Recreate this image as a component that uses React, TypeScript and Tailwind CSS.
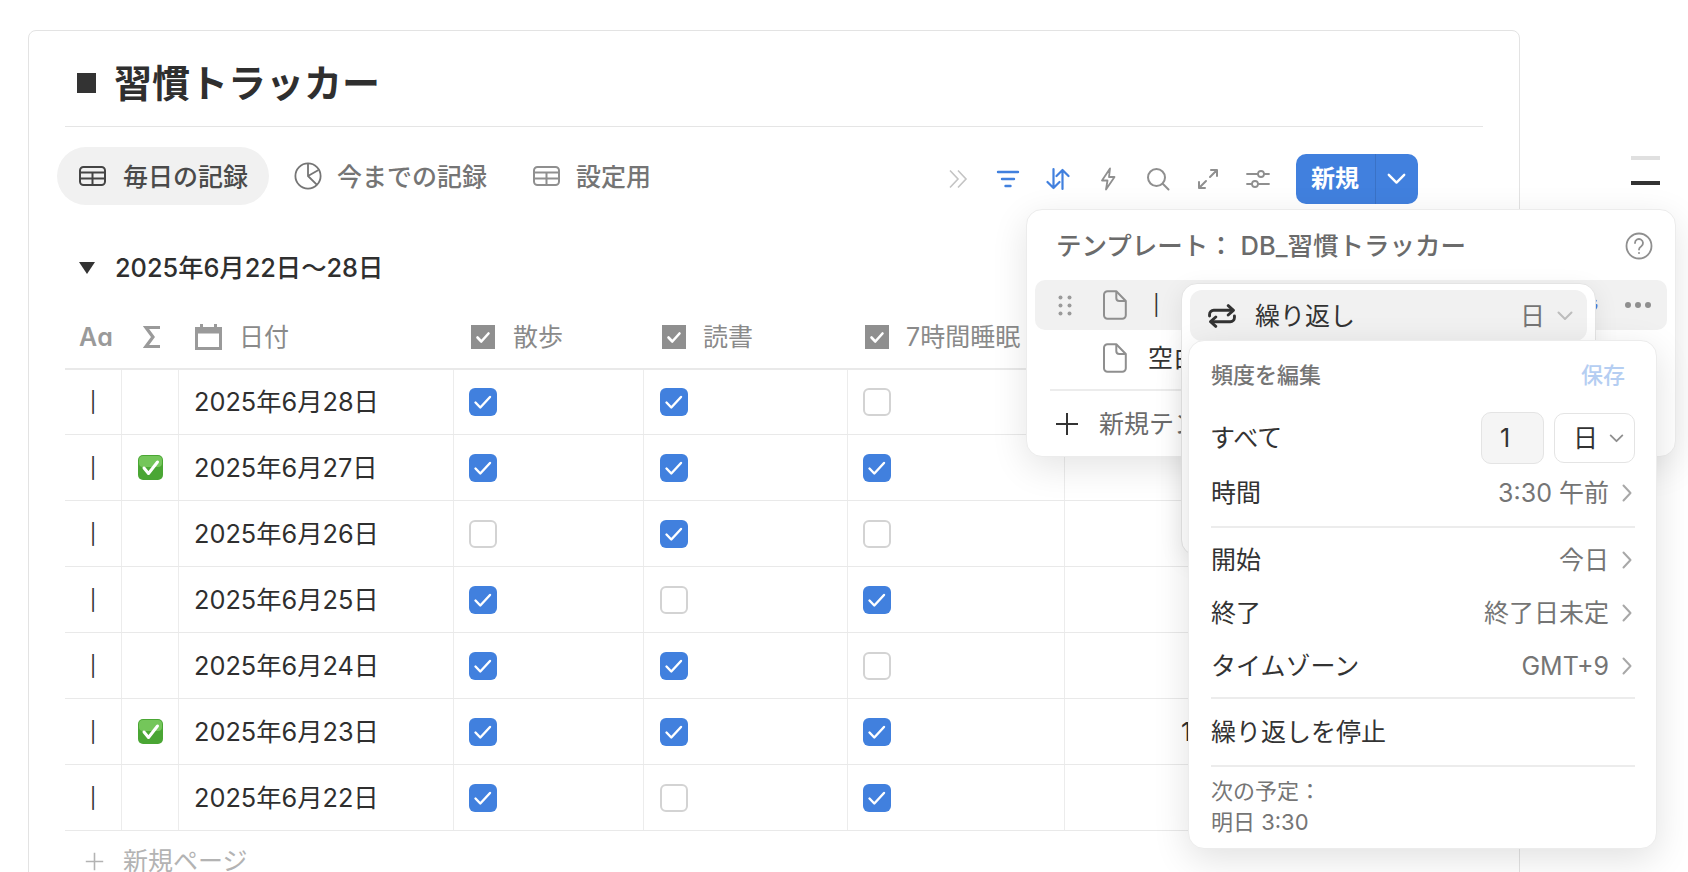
const rows = [
  { date: "2025年6月28日", done: false, walk: true, read: true, sleep: false },
  { date: "2025年6月27日", done: true, walk: true, read: true, sleep: true },
  { date: "2025年6月26日", done: false, walk: false, read: true, sleep: false },
  { date: "2025年6月25日", done: false, walk: true, read: false, sleep: true },
  { date: "2025年6月24日", done: false, walk: true, read: true, sleep: false },
  { date: "2025年6月23日", done: true, walk: true, read: true, sleep: true, count: "10" },
  { date: "2025年6月22日", done: false, walk: true, read: false, sleep: true },
];

const columns = "grid grid-cols-[57px_57px_275px_190px_204px_217px_1fr]";

function TableIcon({ className }: { className?: string }) {
  return (
    <svg viewBox="0 0 27 20" className={className} fill="none" stroke="currentColor" strokeWidth="2">
      <rect x="1" y="1" width="25" height="18" rx="3.5" />
      <path d="M1 6.500h25M1 12.500h25M13.500 6.500V19" />
    </svg>
  );
}

function PieIcon({ className }: { className?: string }) {
  return (
    <svg viewBox="0 0 28 28" className={className} fill="none" stroke="currentColor" strokeWidth="1.800">
      <circle cx="14" cy="14" r="12.600" />
      <path d="M14 1.400V14l9 8.800M14 14l10.500-6" />
    </svg>
  );
}

function FileIcon({ className }: { className?: string }) {
  return (
    <svg viewBox="0 0 24 30" className={className} fill="none" stroke="#8f8f8f" strokeWidth="2" strokeLinejoin="round">
      <path d="M4.500 1.200h8.800l9.500 9.800v14.300a3.500 3.500 0 0 1-3.500 3.500h-14.800a3.500 3.500 0 0 1-3.500-3.500V4.700a3.500 3.500 0 0 1 3.500-3.500z" />
      <path d="M13.300 1.200v6.800a3 3 0 0 0 3 3h6.500" />
    </svg>
  );
}

function RepeatIcon({ className }: { className?: string }) {
  return (
    <svg viewBox="0 0 27 23" className={className} fill="none" stroke="currentColor" strokeWidth="2.800" strokeLinecap="round" strokeLinejoin="round">
      <path d="M1.500 11.500V10a4 4 0 0 1 4-4H24" />
      <path d="M19.500 1.500L24.500 6 19.500 10.500" />
      <path d="M25.500 11.500V13a4 4 0 0 1-4 4H3" />
      <path d="M7.500 12.500L2.500 17 7.500 21.500" />
    </svg>
  );
}

function Caret({ className }: { className?: string }) {
  return (
    <svg viewBox="0 0 16 10" className={className} fill="none" stroke="currentColor" strokeWidth="2" strokeLinecap="round" strokeLinejoin="round">
      <path d="M1.500 1.500L8 8l6.500-6.500" />
    </svg>
  );
}

function Arrow() {
  return (
    <svg viewBox="0 0 10 18" className="w-[10px] h-[18px] text-[#a8a8a8]" fill="none" stroke="currentColor" strokeWidth="2" strokeLinecap="round" strokeLinejoin="round">
      <path d="M1.500 1.500L8.500 9l-7 7.500" />
    </svg>
  );
}

function Cross({ className }: { className?: string }) {
  return (
    <svg viewBox="0 0 24 24" className={className} fill="none" stroke="currentColor" strokeWidth="2">
      <path d="M12 1v22M1 12h22" />
    </svg>
  );
}

function HeaderCheck() {
  return (
    <svg viewBox="0 0 24 24" className="w-[24px] h-[24px] shrink-0">
      <rect width="24" height="24" fill="#8f8f8f" />
      <path d="M6.500 12.500l3.800 4L17.500 8.500" fill="none" stroke="white" strokeWidth="2.600" strokeLinecap="round" strokeLinejoin="round" />
    </svg>
  );
}

function Box({ on }: { on: boolean }) {
  if (!on) {
    return <div className="w-[28px] h-[28px] rounded-[6px] border-2 border-[#d3d3d3] bg-white" />;
  }
  return (
    <div className="w-[28px] h-[28px] rounded-[6px] bg-[#4180de] flex items-center justify-center">
      <svg viewBox="0 0 28 28" className="w-[28px] h-[28px]" fill="none" stroke="white" strokeWidth="2.400" strokeLinecap="round" strokeLinejoin="round">
        <path d="M6.500 14.500l4.800 5L21 9" />
      </svg>
    </div>
  );
}

function GreenCheck() {
  return (
    <svg viewBox="0 0 25 25" className="w-[25px] h-[25px]">
      <rect width="25" height="25" rx="5" fill="#4aa634" />
      <rect x="1" y="1" width="23" height="11" rx="4" fill="#74c65a" />
      <path d="M6 13l4.500 5.500L19.500 7" fill="none" stroke="white" strokeWidth="3" strokeLinecap="round" strokeLinejoin="round" />
    </svg>
  );
}

function DetailRow({ label, value, height = "h-[53px]" }: { label: string; value: string; height?: string }) {
  return (
    <div className={`flex items-center justify-between ${height}`}>
      <span className="text-[#333333]">{label}</span>
      <span className="flex items-center gap-[13px] pr-[3px] text-[#757575]">
        {value}
        <Arrow />
      </span>
    </div>
  );
}

export default function App() {
  return (
    <div className="relative w-full h-[872px] overflow-hidden bg-white pt-[30px] pl-[28px] text-[25px] leading-[32px] text-[#2f2f2f] font-['Inter','Noto_Sans_CJK_JP',sans-serif]">
      <div className="w-[1492px] h-[900px] rounded-[8px] border border-[#e3e3e3] px-[36px]">
        {/* title */}
        <div className="h-[96px] flex items-center gap-[18px] pl-[12px] pt-[8px] border-b border-[#e5e5e5]">
          <div className="w-[19px] h-[20px] bg-[#333333]" />
          <h1 className="text-[38px] leading-[44px] font-bold text-[#2f2f2f]">習慣トラッカー</h1>
        </div>

        {/* tabs and toolbar */}
        <div className="flex items-center justify-between mt-[20px] -ml-[8px] pr-[65px]">
          <div className="flex items-center font-medium text-[#757575]">
            <div className="flex items-center h-[58px] w-[212px] pl-[22px] gap-[17px] rounded-full bg-[#f1f1f1] text-[#4a4a4a]">
              <TableIcon className="w-[27px] h-[20px] text-[#444444]" />
              <span className="pt-[2px]">毎日の記録</span>
            </div>
            <div className="flex items-center gap-[15px] ml-[25px]">
              <PieIcon className="w-[28px] h-[28px] text-[#757575]" />
              <span className="pt-[2px]">今までの記録</span>
            </div>
            <div className="flex items-center gap-[16px] ml-[46px]">
              <TableIcon className="w-[27px] h-[20px] text-[#8f8f8f]" />
              <span className="pt-[2px]">設定用</span>
            </div>
          </div>

          <div className="flex items-center gap-[26px] mt-[6px]">
            <svg viewBox="0 0 24 24" className="w-[24px] h-[24px] text-[#c4c4c4]" fill="none" stroke="currentColor" strokeWidth="1.600">
              <path d="M4 3.500L12 12l-8 8.500M12 3.500L20 12l-8 8.500" />
            </svg>
            <svg viewBox="0 0 24 24" className="w-[24px] h-[24px] text-[#4180de]" fill="none" stroke="currentColor" strokeWidth="2.400" strokeLinecap="round">
              <path d="M2 5h20M6 12h12M9.500 19h5" />
            </svg>
            <svg viewBox="0 0 24 24" className="w-[24px] h-[24px] text-[#4180de]" fill="none" stroke="currentColor" strokeWidth="2.200" strokeLinecap="round" strokeLinejoin="round">
              <path d="M7.500 2v19M1.500 15l6 6 6-6" />
              <path d="M16.500 22V3M10.500 9l6-6 6 6" />
            </svg>
            <svg viewBox="0 0 24 24" className="w-[24px] h-[24px] text-[#8f8f8f]" fill="none" stroke="currentColor" strokeWidth="1.800" strokeLinejoin="round">
              <path d="M14 1.500L6 13.500h5.500L10 22.500l8.500-12.500h-5.500z" />
            </svg>
            <svg viewBox="0 0 24 24" className="w-[24px] h-[24px] text-[#8f8f8f]" fill="none" stroke="currentColor" strokeWidth="2" strokeLinecap="round">
              <circle cx="10.500" cy="10.500" r="8.500" />
              <path d="M17 17l5.500 5.500" />
            </svg>
            <svg viewBox="0 0 24 24" className="w-[24px] h-[24px] text-[#8f8f8f]" fill="none" stroke="currentColor" strokeWidth="2" strokeLinecap="round" strokeLinejoin="round">
              <path d="M14 10l7-7M15 3h6v6M10 14l-7 7M3 15v6h6" />
            </svg>
            <svg viewBox="0 0 24 24" className="w-[24px] h-[24px] text-[#8f8f8f]" fill="none" stroke="currentColor" strokeWidth="1.800" strokeLinecap="round">
              <path d="M1 7h11M18 7h5M1 17h5M12 17h11" />
              <circle cx="15" cy="7" r="3" />
              <circle cx="9" cy="17" r="3" />
            </svg>
            <div className="flex items-center w-[122px] h-[50px] rounded-[10px] bg-[#4180de] text-white text-[24px] font-semibold">
              <span className="w-[80px] pl-[15px] h-full flex items-center border-r border-[#3a72c6]">新規</span>
              <Caret className="w-[19px] h-[12px] ml-[11px]" />
            </div>
          </div>
        </div>

        {/* group title */}
        <div className="flex items-center mt-[47px] ml-[14px] gap-[20px] font-medium text-[25.300px]">
          <svg viewBox="0 0 16 12" className="w-[16px] h-[12px]">
            <path d="M0 0h16L8 12z" fill="#333333" />
          </svg>
          2025年6月22日〜28日
        </div>

        {/* table header */}
        <div className={`${columns} h-[66px] mt-[20px] pt-[2px] border-b-2 border-[#e9e9e9] items-center text-[#8a8a8a]`}>
          <div className="pl-[14px] font-semibold text-[#9a9a9a] text-[25px]">Aɑ</div>
          <div className="pl-[21px]">
            <svg viewBox="0 0 18 24" className="w-[18px] h-[24px]" fill="none" stroke="#9a9a9a" strokeWidth="3.200">
              <path d="M17 2.500H3l7 9.500-7 9.500h14" />
            </svg>
          </div>
          <div className="flex items-center gap-[17px] pl-[16px]">
            <svg viewBox="0 0 27 26" className="w-[27px] h-[26px]" fill="none" stroke="#9a9a9a">
              <path d="M1.500 8h24v16.500h-24z" strokeWidth="3" />
              <path d="M0 3h27v6H0z" fill="#9a9a9a" stroke="none" />
              <path d="M6.500 0v4M20.500 0v4" strokeWidth="3" />
            </svg>
            日付
          </div>
          <div className="flex items-center gap-[18px] pl-[17px]">
            <HeaderCheck />
            散歩
          </div>
          <div className="flex items-center gap-[17px] pl-[18px]">
            <HeaderCheck />
            読書
          </div>
          <div className="flex items-center gap-[17px] pl-[17px] whitespace-nowrap">
            <HeaderCheck />
            7時間睡眠
          </div>
          <div />
        </div>

        {/* table rows */}
        {rows.map((row, i) => (
          <div key={row.date} className={`${columns} ${i === 0 ? "h-[65px]" : "h-[66px]"} border-b border-[#e9e9e9]`}>
            <div className="flex items-center justify-center border-r border-[#ececec] text-[20px] text-[#333333]">|</div>
            <div className="flex items-center justify-center border-r border-[#ececec]">
              {row.done && <GreenCheck />}
            </div>
            <div className="flex items-center pl-[15px] border-r border-[#ececec] text-[25.300px]">{row.date}</div>
            <div className="flex items-center pl-[15px] border-r border-[#ececec]">
              <Box on={row.walk} />
            </div>
            <div className="flex items-center pl-[16px] border-r border-[#ececec]">
              <Box on={row.read} />
            </div>
            <div className="flex items-center pl-[15px] border-r border-[#ececec]">
              <Box on={row.sleep} />
            </div>
            <div className="flex items-center pl-[116px]">{row.count}</div>
          </div>
        ))}

        <div className="flex items-center gap-[19px] mt-[14px] ml-[20px] text-[#b3b3b3]">
          <Cross className="w-[19px] h-[19px]" />
          新規ページ
        </div>
      </div>

      {/* scrollbar marks */}
      <div className="absolute left-[1631px] top-[156px] w-[29px] h-[4px] bg-[#e0e0e0]" />
      <div className="absolute left-[1631px] top-[181px] w-[29px] h-[4px] bg-[#333333]" />

      {/* template menu */}
      <div className="absolute left-[1026px] top-[209px] w-[650px] h-[248px] rounded-[16px] border border-[#ececec] bg-white shadow-[0_10px_36px_rgba(0,0,0,0.11)]">
        <div className="flex items-center justify-between h-[70px] pl-[29px] pr-[22px] pt-[2px] text-[25.500px] font-medium text-[#6b6b6b]">
          テンプレート： DB_習慣トラッカー
          <svg viewBox="0 0 28 28" className="w-[28px] h-[28px]" fill="none" stroke="#8f8f8f" strokeWidth="1.800">
            <circle cx="14" cy="14" r="12.500" />
            <path d="M10 11a4 4 0 1 1 6.300 3.300c-1.500 1-2.300 1.800-2.300 3.200" strokeLinecap="round" />
            <circle cx="14" cy="21" r="1" fill="#8f8f8f" stroke="none" />
          </svg>
        </div>
        <div className="flex items-center h-[50px] mx-[8px] rounded-[10px] bg-[#f1f1f1]">
          <svg viewBox="0 0 14 21" className="w-[14px] h-[21px] ml-[23px]" fill="#9a9a9a">
            <circle cx="2.500" cy="2.500" r="2" />
            <circle cx="11.500" cy="2.500" r="2" />
            <circle cx="2.500" cy="10.500" r="2" />
            <circle cx="11.500" cy="10.500" r="2" />
            <circle cx="2.500" cy="18.500" r="2" />
            <circle cx="11.500" cy="18.500" r="2" />
          </svg>
          <FileIcon className="w-[24px] h-[30px] ml-[31px]" />
          <span className="ml-[26px] text-[20px] text-[#333333]">|</span>
          <RepeatIcon className="w-[22px] h-[18px] ml-auto text-[#4180de]" />
          <span className="flex gap-[4px] ml-[27px] mr-[16px]">
            <span className="w-[6px] h-[6px] rounded-full bg-[#8f8f8f]" />
            <span className="w-[6px] h-[6px] rounded-full bg-[#8f8f8f]" />
            <span className="w-[6px] h-[6px] rounded-full bg-[#8f8f8f]" />
          </span>
        </div>
        <div className="flex items-center h-[59px] pl-[76px] gap-[21px] pb-[4px]">
          <FileIcon className="w-[24px] h-[30px]" />
          <span className="text-[#333333]">空白</span>
        </div>
        <div className="h-[2px] mx-[23px] bg-[#ececec]" />
        <div className="flex items-center gap-[20px] h-[65px] pl-[28px] text-[#6b6b6b]">
          <Cross className="w-[24px] h-[24px] text-[#333333]" />
          新規テンプレート
        </div>
      </div>

      {/* repeat menu */}
      <div className="absolute left-[1181px] top-[283px] w-[415px] h-[273px] rounded-[16px] border border-[#e4e4e4] bg-white pt-[6px] px-[8px] shadow-[0_6px_24px_rgba(0,0,0,0.08)]">
        <div className="flex items-center h-[51px] rounded-[12px] bg-[#f1f1f1] pl-[18px] pr-[14px]">
          <RepeatIcon className="w-[28px] h-[24px] text-[#333333]" />
          <span className="ml-[19px] text-[#333333]">繰り返し</span>
          <span className="ml-auto text-[#757575]">日</span>
          <Caret className="w-[16px] h-[10px] ml-[12px] text-[#bdbdbd]" />
        </div>
      </div>

      {/* frequency editor */}
      <div className="absolute left-[1188px] top-[340px] w-[469px] h-[509px] rounded-[16px] border border-[#ececec] bg-white pt-[14px] pl-[22px] pr-[21px] shadow-[0_10px_36px_rgba(0,0,0,0.12)]">
        <div className="flex items-center justify-between h-[40px] pr-[10px] text-[22px] font-medium text-[#757575]">
          頻度を編集
          <span className="text-[#b5cef2]">保存</span>
        </div>
        <div className="flex items-center h-[52px] mt-[17px] text-[#333333]">
          <span className="-ml-[1px]">すべて</span>
          <div className="flex items-center w-[63px] h-[52px] ml-auto pl-[18px] rounded-[10px] border border-[#e4e4e4] bg-[#f5f5f5]">1</div>
          <div className="flex items-center w-[81px] h-[50px] ml-[10px] pl-[18px] gap-[11px] rounded-[10px] border border-[#e4e4e4]">
            日
            <Caret className="w-[15px] h-[9px] text-[#8f8f8f]" />
          </div>
        </div>
        <DetailRow label="時間" value="3:30 午前" height="h-[58px]" />
        <div className="h-[2px] mt-[4px] mb-[5px] bg-[#ececec]" />
        <DetailRow label="開始" value="今日" />
        <DetailRow label="終了" value="終了日未定" />
        <DetailRow label="タイムゾーン" value="GMT+9" />
        <div className="h-[2px] mt-[5px] bg-[#ececec]" />
        <div className="flex items-center h-[63px] pt-[2px] text-[#333333]">繰り返しを停止</div>
        <div className="h-[2px] mt-[3px] bg-[#ececec]" />
        <div className="mt-[9px] text-[22px] leading-[31px] text-[#757575]">
          <div>次の予定：</div>
          <div>明日 3:30</div>
        </div>
      </div>
    </div>
  );
}
